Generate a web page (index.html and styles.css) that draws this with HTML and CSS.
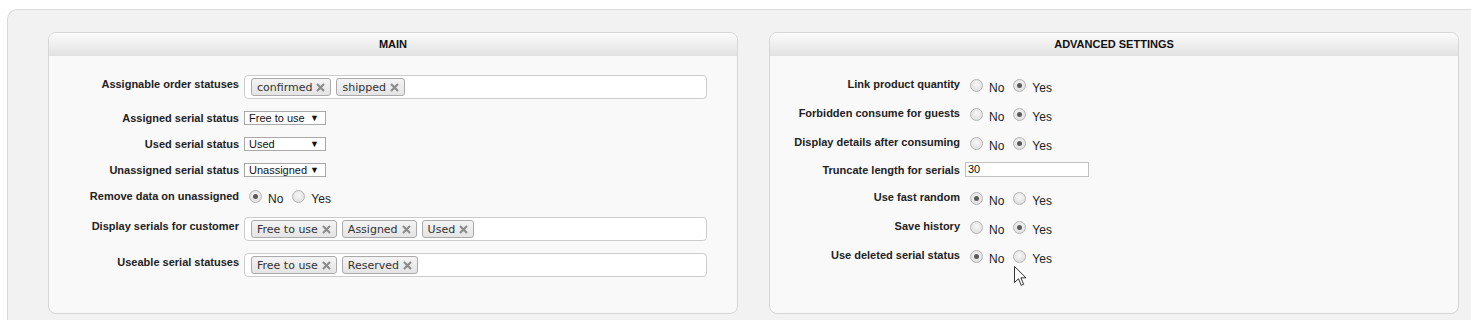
FILE: index.html
```html
<!DOCTYPE html>
<html>
<head>
<meta charset="utf-8">
<link rel="stylesheet" href="styles.css">
</head>
<body>
<div class="wrap">
  <div class="panels">
    <section class="panel">
      <div class="panel-head">MAIN</div>
      <div class="panel-body main-body">
        <div class="row tags-row">
          <div class="label">Assignable order statuses</div>
          <div class="tagbox">
            <span class="tag">confirmed<svg class="x" viewBox="0 0 9 9"><path d="M1 1L8 8M8 1L1 8"/></svg></span>
            <span class="tag">shipped<svg class="x" viewBox="0 0 9 9"><path d="M1 1L8 8M8 1L1 8"/></svg></span>
          </div>
        </div>
        <div class="row">
          <div class="label">Assigned serial status</div>
          <div class="select"><span>Free to use</span><span class="arrow">▼</span></div>
        </div>
        <div class="row">
          <div class="label">Used serial status</div>
          <div class="select"><span>Used</span><span class="arrow">▼</span></div>
        </div>
        <div class="row">
          <div class="label">Unassigned serial status</div>
          <div class="select"><span>Unassigned</span><span class="arrow">▼</span></div>
        </div>
        <div class="row radio-row">
          <div class="label">Remove data on unassigned</div>
          <div class="radios">
            <span class="radio checked"></span><span class="opt">No</span>
            <span class="radio"></span><span class="opt">Yes</span>
          </div>
        </div>
        <div class="row tags-row">
          <div class="label">Display serials for customer</div>
          <div class="tagbox">
            <span class="tag">Free to use<svg class="x" viewBox="0 0 9 9"><path d="M1 1L8 8M8 1L1 8"/></svg></span>
            <span class="tag">Assigned<svg class="x" viewBox="0 0 9 9"><path d="M1 1L8 8M8 1L1 8"/></svg></span>
            <span class="tag">Used<svg class="x" viewBox="0 0 9 9"><path d="M1 1L8 8M8 1L1 8"/></svg></span>
          </div>
        </div>
        <div class="row tags-row">
          <div class="label">Useable serial statuses</div>
          <div class="tagbox">
            <span class="tag">Free to use<svg class="x" viewBox="0 0 9 9"><path d="M1 1L8 8M8 1L1 8"/></svg></span>
            <span class="tag">Reserved<svg class="x" viewBox="0 0 9 9"><path d="M1 1L8 8M8 1L1 8"/></svg></span>
          </div>
        </div>
      </div>
    </section>

    <section class="panel">
      <div class="panel-head">ADVANCED SETTINGS</div>
      <div class="panel-body adv-body">
        <div class="row radio-row">
          <div class="label">Link product quantity</div>
          <div class="radios">
            <span class="radio"></span><span class="opt">No</span>
            <span class="radio checked"></span><span class="opt">Yes</span>
          </div>
        </div>
        <div class="row radio-row">
          <div class="label">Forbidden consume for guests</div>
          <div class="radios">
            <span class="radio"></span><span class="opt">No</span>
            <span class="radio checked"></span><span class="opt">Yes</span>
          </div>
        </div>
        <div class="row radio-row">
          <div class="label">Display details after consuming</div>
          <div class="radios">
            <span class="radio"></span><span class="opt">No</span>
            <span class="radio checked"></span><span class="opt">Yes</span>
          </div>
        </div>
        <div class="row input-row">
          <div class="label">Truncate length for serials</div>
          <div class="text-input">30</div>
        </div>
        <div class="row radio-row">
          <div class="label">Use fast random</div>
          <div class="radios">
            <span class="radio checked"></span><span class="opt">No</span>
            <span class="radio"></span><span class="opt">Yes</span>
          </div>
        </div>
        <div class="row radio-row">
          <div class="label">Save history</div>
          <div class="radios">
            <span class="radio"></span><span class="opt">No</span>
            <span class="radio checked"></span><span class="opt">Yes</span>
          </div>
        </div>
        <div class="row radio-row">
          <div class="label">Use deleted serial status</div>
          <div class="radios">
            <span class="radio checked"></span><span class="opt">No</span>
            <span class="radio"></span><span class="opt">Yes</span>
          </div>
        </div>
        <svg class="cursor" width="13" height="21" viewBox="0 0 13 21"><path d="M0.5 0.5L0.5 16.5L4.5 12.7L7.2 19.3L9.6 18.3L6.9 11.8L12 11.8Z" fill="#fff" stroke="#333" stroke-width="1"/></svg>
      </div>
    </section>
  </div>
</div>
</body>
</html>
```

FILE: styles.css
```css
html, body {
  margin: 0;
  padding: 0;
  background: #ffffff;
  height: 320px;
  overflow: hidden;
}

body {
  font-family: "Liberation Sans", Arial, sans-serif;
  color: #222;
}

.wrap {
  margin: 9px 0 0 7px;
  border-top: 1px solid #d9d9d9;
  border-left: 1px solid #d9d9d9;
  border-top-left-radius: 10px;
  background: #f2f2f2;
  padding: 22px 0 0 40px;
  height: 320px;
  box-sizing: border-box;
}

.panels {
  display: flex;
  gap: 31px;
}

.panel {
  width: 690px;
  height: 282px;
  box-sizing: border-box;
  border: 1px solid #d6d6d6;
  border-radius: 8px;
  background: #f9f9f9;
  overflow: hidden;
}

.panel-head {
  height: 22px;
  line-height: 23px;
  text-align: center;
  font-size: 11px;
  font-weight: bold;
  color: #111;
  background: linear-gradient(#fbfbfb, #e3e3e3);
  border-bottom: 1px solid #e2e2e2;
}

.panel-body {
  display: flex;
  flex-direction: column;
  padding-right: 30px;
  position: relative;
}

.main-body {
  padding-top: 19px;
  gap: 12px;
}

.main-body .radios {
  height: 16px;
}

.adv-body {
  padding-top: 21px;
  gap: 11px;
}

.row {
  display: grid;
  grid-template-columns: 190px 1fr;
  column-gap: 5px;
  align-items: start;
}

.label {
  text-align: right;
  font-size: 11px;
  font-weight: bold;
  line-height: 14px;
  color: #222;
  white-space: nowrap;
}

.tags-row .label {
  padding-top: 2px;
}

/* tag box */
.tagbox {
  height: 24px;
  box-sizing: border-box;
  border: 1px solid #cccccc;
  border-radius: 4px;
  background: #fff;
  display: flex;
  align-items: center;
  gap: 5px;
  padding-left: 6px;
}

.tag {
  display: inline-flex;
  align-items: center;
  height: 18px;
  box-sizing: border-box;
  border: 1px solid #aaaaaa;
  border-radius: 3px;
  background: linear-gradient(#f4f4f4, #e4e4e4);
  padding: 0 5px 0 5px;
  font-family: "DejaVu Sans", Verdana, sans-serif;
  font-size: 11px;
  color: #333;
  gap: 4px;
}

.x {
  width: 9px;
  height: 9px;
  stroke: #8c8c8c;
  stroke-width: 2.2;
  fill: none;
  margin-top: 1px;
}

/* select */
.select {
  width: 82px;
  height: 14px;
  box-sizing: border-box;
  border: 1px solid #a9a9a9;
  background: #fff;
  display: flex;
  align-items: center;
  justify-content: space-between;
  padding: 0 6px 0 4px;
  font-size: 11px;
  line-height: 12px;
  color: #111;
}

.select .arrow {
  font-size: 9px;
  line-height: 12px;
  color: #111;
}

/* radios */
.radios {
  display: flex;
  align-items: center;
  height: 18px;
  font-size: 12px;
}

.radio {
  width: 13px;
  height: 13px;
  box-sizing: border-box;
  border-radius: 50%;
  border: 1px solid #b4b4b4;
  background: radial-gradient(circle at 50% 40%, #f7f7f7 0%, #e2e2e2 70%, #d6d6d6 100%);
  margin: -1px 3px 0 5px;
  position: relative;
  flex: none;
}

.radio.checked::after {
  content: "";
  position: absolute;
  left: 3px;
  top: 3px;
  width: 5px;
  height: 5px;
  border-radius: 50%;
  background: #5a5a5a;
}

.opt {
  padding-top: 3px;
  margin-left: 3px;
  margin-right: 4px;
  color: #222;
}

/* text input */
.input-row {
  height: 15px;
}

.text-input {
  width: 124px;
  height: 15px;
  box-sizing: border-box;
  border: 1px solid #c2c2c2;
  background: #fff;
  font-size: 11px;
  line-height: 13px;
  padding-left: 2px;
  color: #111;
  margin-top: -2px;
}

.input-row .label {
  margin-top: -1px;
}

.cursor {
  position: absolute;
  left: 244px;
  top: 210px;
}
```
